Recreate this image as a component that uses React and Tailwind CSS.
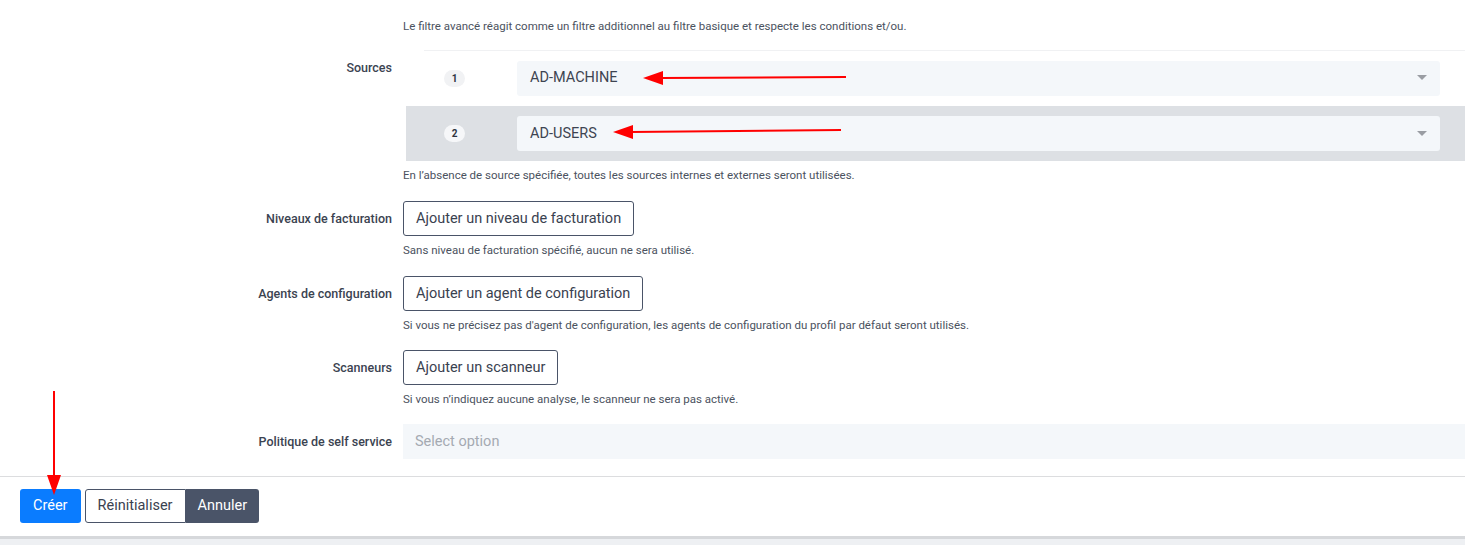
import React from 'react';

const font = { fontFamily: 'Roboto, "Liberation Sans", sans-serif' };

function Caret() {
  return (
    <svg width="10" height="6" viewBox="0 0 10 6" className="shrink-0">
      <path d="M0 0 L10 0 L5 5 Z" fill="#9a9da3" />
    </svg>
  );
}

function SourceRow({ index, value, active }) {
  return (
    <div
      className={
        active
          ? 'flex items-center h-[55px] bg-[#dde0e4] -ml-[18px] pl-[18px] pr-[25px]'
          : 'flex items-center h-[55px] pr-[25px] border-b border-transparent'
      }
    >
      <div className="w-[93px] flex pl-[20px]">
        <span
          className={
            (active ? 'bg-[#f6f7f9] ' : 'bg-[#f1f2f4] ') +
            'w-[21px] h-[17px] rounded-full flex items-center justify-center text-[10px] font-bold text-[#2f3542]'
          }
        >
          {index}
        </span>
      </div>
      <div className="flex-1 h-[35px] bg-[#f4f7fa] rounded-[3px] flex items-center justify-between pl-[13px] pr-[13px]">
        <span className="text-[14.5px] text-[#3d4451]">{value}</span>
        <Caret />
      </div>
    </div>
  );
}

function Label({ children }) {
  return (
    <div className="text-right text-[12.5px] font-medium text-[#3b4351] pt-[10px] leading-[15px]">
      {children}
    </div>
  );
}

function Help({ children }) {
  return <p className="text-[11.5px] text-[#4b5260] leading-[14px] mt-[7px]">{children}</p>;
}

function AddButton({ children }) {
  return (
    <button className="h-[35px] px-[12px] border border-[#4a5468] rounded-[3px] bg-white text-[14.5px] text-[#3a4250]">
      {children}
    </button>
  );
}

export default function App() {
  return (
    <div className="relative w-[1465px] h-[545px] bg-[#eef0f3] overflow-hidden" style={font}>
      <div className="bg-white border-b-[3px] border-[#d6d8db]">
        <div className="grid grid-cols-[392px_1fr] gap-x-[11px] pt-[19px] pb-[17px]">
          <div />
          <p className="text-[11.5px] text-[#4b5260] leading-[14px]">
            Le filtre avancé réagit comme un filtre additionnel au filtre basique et respecte les conditions et/ou.
          </p>

          <div className="mt-[17px]">
            <Label>Sources</Label>
          </div>
          <div className="mt-[17px]">
            <div className="ml-[21px] border-t border-[#f0f1f3]">
              <SourceRow index="1" value="AD-MACHINE" />
              <SourceRow index="2" value="AD-USERS" active />
            </div>
            <Help>En l’absence de source spécifiée, toutes les sources internes et externes seront utilisées.</Help>
          </div>

          <div className="mt-[19px]">
            <Label>Niveaux de facturation</Label>
          </div>
          <div className="mt-[19px]">
            <AddButton>Ajouter un niveau de facturation</AddButton>
            <Help>Sans niveau de facturation spécifié, aucun ne sera utilisé.</Help>
          </div>

          <div className="mt-[19px]">
            <Label>Agents de configuration</Label>
          </div>
          <div className="mt-[19px]">
            <AddButton>Ajouter un agent de configuration</AddButton>
            <Help>Si vous ne précisez pas d'agent de configuration, les agents de configuration du profil par défaut seront utilisés.</Help>
          </div>

          <div className="mt-[18px]">
            <Label>Scanneurs</Label>
          </div>
          <div className="mt-[18px]">
            <AddButton>Ajouter un scanneur</AddButton>
            <Help>Si vous n’indiquez aucune analyse, le scanneur ne sera pas activé.</Help>
          </div>

          <div className="mt-[18px]">
            <Label>Politique de self service</Label>
          </div>
          <div className="mt-[18px]">
            <div className="h-[35px] bg-[#f4f7fa] flex items-center pl-[12px] text-[14.5px] text-[#a5aab2]">
              Select option
            </div>
          </div>
        </div>

        <div className="border-t border-[#dcdddf] flex items-center pl-[20px] pt-[12px] pb-[13px]">
          <button className="h-[34px] px-[13px] bg-[#0a7cff] text-white text-[14.5px] rounded-[3px] mr-[4px]">
            Créer
          </button>
          <button className="h-[34px] px-[12px] bg-white border border-[#4a5468] text-[#3a4250] text-[14.5px] rounded-l-[3px]">
            Réinitialiser
          </button>
          <button className="h-[34px] px-[12px] bg-[#4a5468] text-white text-[14.5px] rounded-r-[3px]">
            Annuler
          </button>
        </div>
      </div>

      {/* annotation arrows */}
      <svg className="absolute inset-0 pointer-events-none" width="1465" height="545">
        <line x1="846" y1="77" x2="660" y2="78" stroke="#ff0000" strokeWidth="2" />
        <path d="M643 78 L663 71 L663 85 Z" fill="#ff0000" />
        <line x1="841" y1="130" x2="630" y2="132" stroke="#ff0000" strokeWidth="2" />
        <path d="M613 132 L633 125 L633 139 Z" fill="#ff0000" />
        <line x1="54" y1="391" x2="54" y2="478" stroke="#ff0000" strokeWidth="2" />
        <path d="M54 495 L47 475 L61 475 Z" fill="#ff0000" />
      </svg>
    </div>
  );
}
